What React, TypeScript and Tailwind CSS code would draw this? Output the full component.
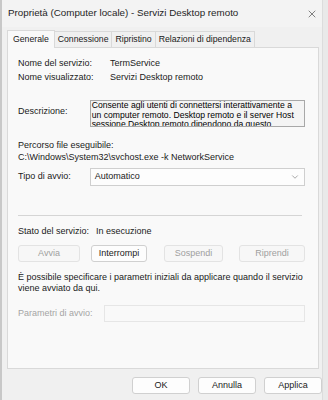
import { ChevronDown, X } from "lucide-react";

const font = { fontFamily: '"Liberation Sans", Arial, sans-serif' };

function Btn({ label, w, disabled, focused }: { label: string; w: string; disabled?: boolean; focused?: boolean }) {
  return (
    <div
      className={`${w} h-[17px] flex items-center justify-center rounded-[3px] border text-[9px] ${
        disabled ? "border-[#e3e3e3] bg-[#f7f7f7] text-[#a0a0a0]" : "border-[#d0d0d0] bg-[#fdfdfd] text-[#1a1a1a]"
      } ${focused ? "border-[#bdbdbd]" : ""}`}
    >
      {label}
    </div>
  );
}

export default function App() {
  return (
    <div className="w-[328px] h-[400px] bg-[#eeeeee] flex overflow-hidden text-[#1a1a1a]" style={font}>
      <div className="w-[2px] bg-[#c8c8c8]" />
      <div className="w-[320px] bg-[#f0f0f0] flex flex-col">
        {/* title bar */}
        <div className="h-[27px] flex items-center justify-between pl-[6px] pr-[4px] bg-[#f3f3f3]">
          <span className="text-[9.8px] text-[#1f1f1f]">Proprietà (Computer locale) - Servizi Desktop remoto</span>
          <X size={12} strokeWidth={1.2} className="text-[#333]" />
        </div>

        {/* tabs */}
        <div className="flex items-end pl-[5px] h-[20px] text-[8.7px]">
          <div className="h-[18px] px-[5px] flex items-center bg-[#f9f9f9] border border-b-0 border-[#d9d9d9] relative top-[1px] z-10">
            Generale
          </div>
          <div className="h-[16px] px-[3px] flex items-center border border-l-0 border-b-0 border-[#d9d9d9] bg-[#f0f0f0]">Connessione</div>
          <div className="h-[16px] px-[3px] flex items-center border border-l-0 border-b-0 border-[#d9d9d9] bg-[#f0f0f0]">Ripristino</div>
          <div className="h-[16px] px-[3px] flex items-center border border-l-0 border-b-0 border-[#d9d9d9] bg-[#f0f0f0]">Relazioni di dipendenza</div>
        </div>

        {/* panel */}
        <div className="ml-[5px] w-[312px] h-[322px] bg-[#f9f9f9] border border-[#d9d9d9] pl-[10px] pr-[13px] pt-[9px] text-[9px] flex flex-col">
          <div className="flex h-[14px] items-center">
            <span className="w-[92px]">Nome del servizio:</span>
            <span>TermService</span>
          </div>
          <div className="flex h-[14px] items-center">
            <span className="w-[92px]">Nome visualizzato:</span>
            <span>Servizi Desktop remoto</span>
          </div>

          <div className="flex mt-[15px] items-start">
            <span className="w-[72px] mt-[5px]">Descrizione:</span>
            <div className="w-[216px] h-[27px] border border-[#a8a8a8] bg-[#f4f4f4] overflow-hidden pl-[1px] leading-[9.5px] text-[8.6px] text-black whitespace-nowrap">
              Consente agli utenti di connettersi interattivamente a
              <br />
              un computer remoto. Desktop remoto e il server Host
              <br />
              sessione Desktop remoto dipendono da questo
            </div>
          </div>

          <div className="mt-[12px] leading-[12px]">Percorso file eseguibile:</div>
          <div className="leading-[12px]">C:\Windows\System32\svchost.exe -k NetworkService</div>

          <div className="flex mt-[5px] items-center">
            <span className="w-[72px]">Tipo di avvio:</span>
            <div className="w-[216px] h-[18px] border border-[#cfcfcf] bg-[#fdfdfd] flex items-center justify-between pl-[4px] pr-[4px]">
              <span>Automatico</span>
              <ChevronDown size={10} strokeWidth={1.2} className="text-[#555]" />
            </div>
          </div>

          <div className="mt-[29px] w-[284px] h-px bg-[#d5d5d5]" />

          <div className="flex mt-[9px] h-[14px] items-center">
            <span className="w-[78px]">Stato del servizio:</span>
            <span>In esecuzione</span>
          </div>

          <div className="flex mt-[6px]">
            <Btn label="Avvia" w="w-[62px]" disabled />
            <div className="ml-[11px]">
              <Btn label="Interrompi" w="w-[56px]" focused />
            </div>
            <div className="ml-[17px]">
              <Btn label="Sospendi" w="w-[59px]" disabled />
            </div>
            <div className="ml-[16px]">
              <Btn label="Riprendi" w="w-[66px]" disabled />
            </div>
          </div>

          <div className="mt-[10px] leading-[11px]">
            È possibile specificare i parametri iniziali da applicare quando il servizio
            <br />
            viene avviato da qui.
          </div>

          <div className="flex mt-[11px] items-center">
            <span className="w-[86px] text-[#a5a5a5]">Parametri di avvio:</span>
            <div className="w-[202px] h-[17px] border border-[#e6e6e6] bg-[#f9f9f9]" />
          </div>
        </div>

        {/* footer */}
        <div className="flex justify-end gap-[8px] mt-[8px]">
          <Btn label="OK" w="w-[58px]" focused />
          <Btn label="Annulla" w="w-[58px]" />
          <Btn label="Applica" w="w-[58px]" />
        </div>
      </div>
      <div className="flex-1 bg-[#e9e9e9] border-l border-[#dcdcdc]" />
    </div>
  );
}
